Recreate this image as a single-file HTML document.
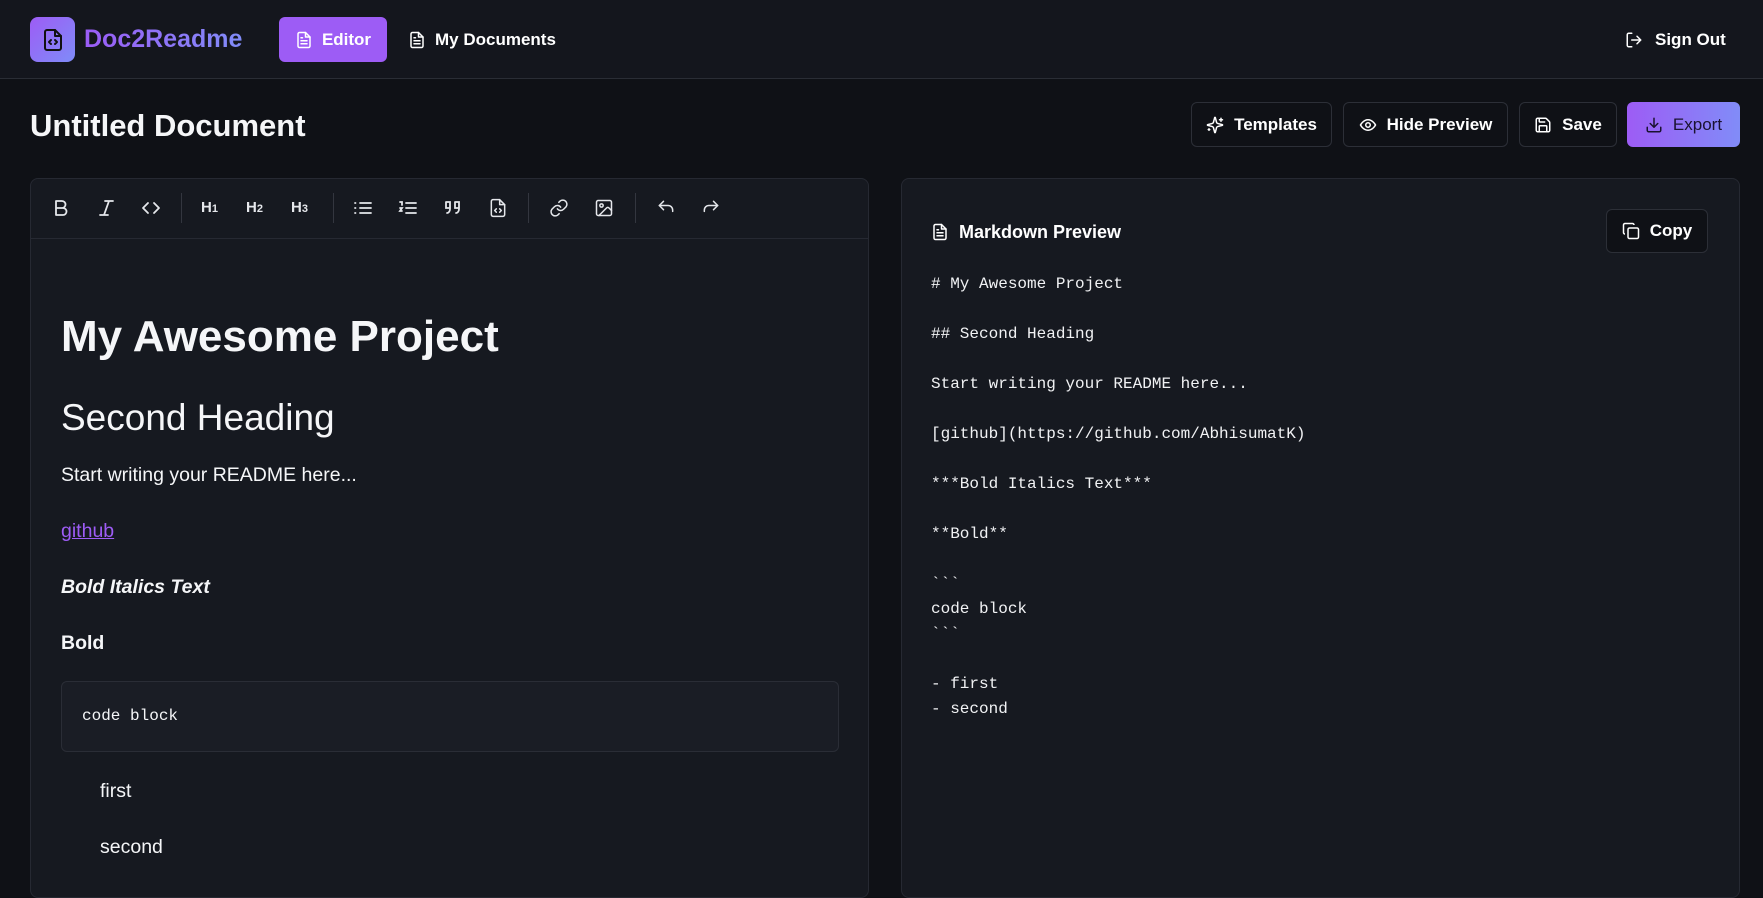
<!DOCTYPE html>
<html><head><meta charset="utf-8"><style>
*{box-sizing:border-box;margin:0;padding:0}
body{width:1763px;height:868px;overflow:hidden;background:#0f1116;font-family:"Liberation Sans",sans-serif;color:#f5f6f8;position:relative}
.abs{position:absolute}
header{position:absolute;left:0;top:0;width:1763px;height:79px;background:#14161d;border-bottom:1px solid #2a2d35}
.logo{left:30px;top:17px;width:45px;height:45px;border-radius:8px;background:linear-gradient(135deg,#9d5cf5,#7f8cf8);display:flex;align-items:center;justify-content:center}
.brand{left:84px;top:25px;font-size:25px;font-weight:bold;background:linear-gradient(90deg,#9b5cf6,#818cf8);-webkit-background-clip:text;background-clip:text;color:transparent}
.nav{display:flex;align-items:center;gap:9px;font-size:17px;font-weight:bold;color:#fff}
.btn{position:absolute;top:102px;height:45px;border:1px solid #2c2f37;border-radius:6px;background:#0f1116;display:flex;align-items:center;justify-content:center;gap:10px;font-size:17px;font-weight:bold;color:#fff}
.panel{position:absolute;top:178px;height:720px;border:1px solid #262932;border-radius:8px;background:#161920}
svg{display:block}
.tb{position:absolute;top:196px}
.sep{position:absolute;top:193px;width:1px;height:30px;background:#33363f}
.md{position:absolute;left:931px;font-family:"Liberation Mono",monospace;font-size:16px;color:#f1f2f4;white-space:pre;line-height:25px}
</style></head><body>
<header>
<div class="abs logo"><svg width="24" height="24" viewBox="0 0 24 24" fill="none" stroke="#111" stroke-width="2" stroke-linecap="round" stroke-linejoin="round"><path d="M14 2H6a2 2 0 0 0-2 2v16a2 2 0 0 0 2 2h12a2 2 0 0 0 2-2V8z"/><path d="M14 2v6h6"/><path d="M10 12l-2 2 2 2M14 12l2 2-2 2"/></svg></div>
<div class="abs brand">Doc2Readme</div>
<div class="abs nav" style="left:279px;top:17px;width:108px;height:45px;background:#9d5cf5;border-radius:6px;justify-content:center">
<svg width="18" height="18" viewBox="0 0 24 24" fill="none" stroke="#fff" stroke-width="2" stroke-linecap="round" stroke-linejoin="round"><path d="M14 2H6a2 2 0 0 0-2 2v16a2 2 0 0 0 2 2h12a2 2 0 0 0 2-2V8z"/><path d="M14 2v6h6M16 13H8M16 17H8M10 9H8"/></svg>Editor</div>
<div class="abs nav" style="left:408px;top:17px;height:45px">
<svg width="18" height="18" viewBox="0 0 24 24" fill="none" stroke="#fff" stroke-width="2" stroke-linecap="round" stroke-linejoin="round"><path d="M14 2H6a2 2 0 0 0-2 2v16a2 2 0 0 0 2 2h12a2 2 0 0 0 2-2V8z"/><path d="M14 2v6h6M16 13H8M16 17H8M10 9H8"/></svg>My Documents</div>
<div class="abs nav" style="left:1625px;top:17px;height:45px;gap:12px">
<svg width="18" height="18" viewBox="0 0 24 24" fill="none" stroke="#fff" stroke-width="2" stroke-linecap="round" stroke-linejoin="round"><path d="M9 21H5a2 2 0 0 1-2-2V5a2 2 0 0 1 2-2h4M16 17l5-5-5-5M21 12H9"/></svg>Sign Out</div>
</header>
<div class="abs" style="left:30px;top:108px;font-size:31px;font-weight:bold">Untitled Document</div>
<div class="btn" style="left:1191px;width:141px"><svg width="18" height="18" viewBox="0 0 24 24" fill="none" stroke="#fff" stroke-width="2" stroke-linecap="round" stroke-linejoin="round"><path d="M9.9 15.5A2 2 0 0 0 8.5 14.1L2.4 12.5a.5.5 0 0 1 0-1l6.1-1.6a2 2 0 0 0 1.4-1.4l1.6-6.1a.5.5 0 0 1 1 0l1.6 6.1a2 2 0 0 0 1.4 1.4l6.1 1.6a.5.5 0 0 1 0 1l-6.1 1.6a2 2 0 0 0-1.4 1.4l-1.6 6.1a.5.5 0 0 1-1 0z"/><path d="M20 3v4M22 5h-4M4 17v2M5 18H3"/></svg>Templates</div>
<div class="btn" style="left:1343px;width:165px"><svg width="18" height="18" viewBox="0 0 24 24" fill="none" stroke="#fff" stroke-width="2"><path d="M2 12s3.6-7 10-7 10 7 10 7-3.6 7-10 7S2 12 2 12z"/><circle cx="12" cy="12" r="3"/></svg>Hide Preview</div>
<div class="btn" style="left:1519px;width:98px"><svg width="18" height="18" viewBox="0 0 24 24" fill="none" stroke="#fff" stroke-width="2" stroke-linejoin="round"><path d="M15.2 3a2 2 0 0 1 1.4.6l3.8 3.8a2 2 0 0 1 .6 1.4V19a2 2 0 0 1-2 2H5a2 2 0 0 1-2-2V5a2 2 0 0 1 2-2z"/><path d="M17 21v-7a1 1 0 0 0-1-1H8a1 1 0 0 0-1 1v7M7 3v4a1 1 0 0 0 1 1h7"/></svg>Save</div>
<div class="btn" style="left:1627px;width:113px;border:none;background:linear-gradient(90deg,#9d5cf5,#818cf8);color:#1a1230;font-weight:normal"><svg width="18" height="18" viewBox="0 0 24 24" fill="none" stroke="#1a1230" stroke-width="2" stroke-linecap="round" stroke-linejoin="round"><path d="M21 15v4a2 2 0 0 1-2 2H5a2 2 0 0 1-2-2v-4M7 10l5 5 5-5M12 15V3"/></svg>Export</div>

<div class="panel" style="left:30px;width:839px">
<div style="position:absolute;left:0;right:0;top:59px;height:1px;background:#262932"></div>
</div>
<svg class="tb" style="left:52px" width="18" height="24" viewBox="0 0 18 24" fill="none" stroke="#e5e7eb" stroke-width="1.8" stroke-linejoin="round"><path d="M4 5h6a3.5 3.5 0 0 1 0 7H4zM4 12h7a3.5 3.5 0 0 1 0 7H4z"/></svg>
<svg class="tb" style="left:97px" width="18" height="24" viewBox="0 0 18 24" fill="none" stroke="#e5e7eb" stroke-width="1.8" stroke-linecap="round"><path d="M8 5h8M3 19h8M12 5L7 19"/></svg>
<svg class="tb" style="left:141px" width="20" height="24" viewBox="0 0 20 24" fill="none" stroke="#e5e7eb" stroke-width="1.8" stroke-linecap="round" stroke-linejoin="round"><path d="M7 7l-5 5 5 5M13 7l5 5-5 5"/></svg>
<div class="sep" style="left:181px"></div>
<div class="tb" style="left:201px;font-size:15px;font-weight:bold;color:#e5e7eb;line-height:24px">H<span style="font-size:11px">1</span></div>
<div class="tb" style="left:246px;font-size:15px;font-weight:bold;color:#e5e7eb;line-height:24px">H<span style="font-size:11px">2</span></div>
<div class="tb" style="left:291px;font-size:15px;font-weight:bold;color:#e5e7eb;line-height:24px">H<span style="font-size:11px">3</span></div>
<div class="sep" style="left:333px"></div>
<svg class="tb" style="left:353px" width="20" height="24" viewBox="0 0 20 24" fill="none" stroke="#e5e7eb" stroke-width="1.8" stroke-linecap="round"><path d="M7 7h11M7 12h11M7 17h11M2 7h.5M2 12h.5M2 17h.5"/></svg>
<svg class="tb" style="left:398px" width="20" height="24" viewBox="0 0 20 24" fill="none" stroke="#e5e7eb" stroke-width="1.8" stroke-linecap="round"><path d="M8 7h10M8 12h10M8 17h10M2 6h2v3M2 12h2l-2 3h2M2 15h2"/></svg>
<svg class="tb" style="left:443px" width="20" height="24" viewBox="0 0 20 24" fill="none" stroke="#e5e7eb" stroke-width="1.8" stroke-linecap="round"><path d="M3 6h4v7c0 3-2 4-3 4M12 6h4v7c0 3-2 4-3 4M3 6v6h3M12 6v6h3"/></svg>
<svg class="tb" style="left:488px" width="20" height="24" viewBox="0 0 24 24" fill="none" stroke="#e5e7eb" stroke-width="1.8" stroke-linecap="round" stroke-linejoin="round"><path d="M14 2H6a2 2 0 0 0-2 2v16a2 2 0 0 0 2 2h12a2 2 0 0 0 2-2V8z"/><path d="M14 2v6h6M10 13l-2 2 2 2M14 13l2 2-2 2"/></svg>
<div class="sep" style="left:528px"></div>
<svg class="tb" style="left:549px" width="20" height="24" viewBox="0 0 24 24" fill="none" stroke="#e5e7eb" stroke-width="1.8" stroke-linecap="round"><path d="M10 13a5 5 0 0 0 7.5.5l3-3a5 5 0 0 0-7-7l-1.7 1.7"/><path d="M14 11a5 5 0 0 0-7.5-.5l-3 3a5 5 0 0 0 7 7l1.7-1.7"/></svg>
<svg class="tb" style="left:594px" width="20" height="24" viewBox="0 0 24 24" fill="none" stroke="#e5e7eb" stroke-width="1.8" stroke-linecap="round" stroke-linejoin="round"><rect x="3" y="3" width="18" height="18" rx="2"/><circle cx="9" cy="9" r="2"/><path d="M21 15l-3-3a2 2 0 0 0-3 0L6 21"/></svg>
<div class="sep" style="left:635px"></div>
<svg class="tb" style="left:656px" width="20" height="24" viewBox="0 0 24 24" fill="none" stroke="#e5e7eb" stroke-width="1.8" stroke-linecap="round" stroke-linejoin="round"><path d="M9 14L4 9l5-5"/><path d="M4 9h10.5a5.5 5.5 0 0 1 5.5 5.5V16"/></svg>
<svg class="tb" style="left:701px" width="20" height="24" viewBox="0 0 24 24" fill="none" stroke="#e5e7eb" stroke-width="1.8" stroke-linecap="round" stroke-linejoin="round"><path d="M15 14l5-5-5-5"/><path d="M20 9H9.5A5.5 5.5 0 0 0 4 14.5V16"/></svg>

<div class="abs" style="left:61px;top:312px;font-size:44px;font-weight:bold">My Awesome Project</div>
<div class="abs" style="left:61px;top:397px;font-size:37px">Second Heading</div>
<div class="abs" style="left:61px;top:464px;font-size:19.5px">Start writing your README here...</div>
<div class="abs" style="left:61px;top:520px;font-size:19.5px;color:#9d5cf5;text-decoration:underline">github</div>
<div class="abs" style="left:61px;top:576px;font-size:19.5px;font-weight:bold;font-style:italic">Bold Italics Text</div>
<div class="abs" style="left:61px;top:632px;font-size:19.5px;font-weight:bold">Bold</div>
<div class="abs" style="left:61px;top:681px;width:778px;height:71px;background:#1a1d25;border:1px solid #2a2d36;border-radius:6px"></div>
<div class="abs" style="left:82px;top:707px;font-family:'Liberation Mono',monospace;font-size:16px">code block</div>
<div class="abs" style="left:100px;top:780px;font-size:19.5px">first</div>
<div class="abs" style="left:100px;top:836px;font-size:19.5px">second</div>

<div class="panel" style="left:901px;width:839px"></div>
<div class="abs nav" style="left:931px;top:221px;height:22px;gap:10px;font-size:18px">
<svg width="18" height="18" viewBox="0 0 24 24" fill="none" stroke="#fff" stroke-width="2" stroke-linecap="round" stroke-linejoin="round"><path d="M14 2H6a2 2 0 0 0-2 2v16a2 2 0 0 0 2 2h12a2 2 0 0 0 2-2V8z"/><path d="M14 2v6h6M16 13H8M16 17H8M10 9H8"/></svg>Markdown Preview</div>
<div class="btn" style="left:1606px;top:209px;width:102px;height:44px"><svg width="18" height="18" viewBox="0 0 24 24" fill="none" stroke="#fff" stroke-width="2" stroke-linejoin="round"><rect x="8" y="8" width="14" height="14" rx="2"/><path d="M4 16a2 2 0 0 1-2-2V4a2 2 0 0 1 2-2h10a2 2 0 0 1 2 2"/></svg>Copy</div>
<div class="md" style="top:272px"># My Awesome Project

## Second Heading

Start writing your README here...

[github](https://github.com/AbhisumatK)

***Bold Italics Text***

**Bold**

&#96;&#96;&#96;
code block
&#96;&#96;&#96;

- first
- second</div>
</body></html>
